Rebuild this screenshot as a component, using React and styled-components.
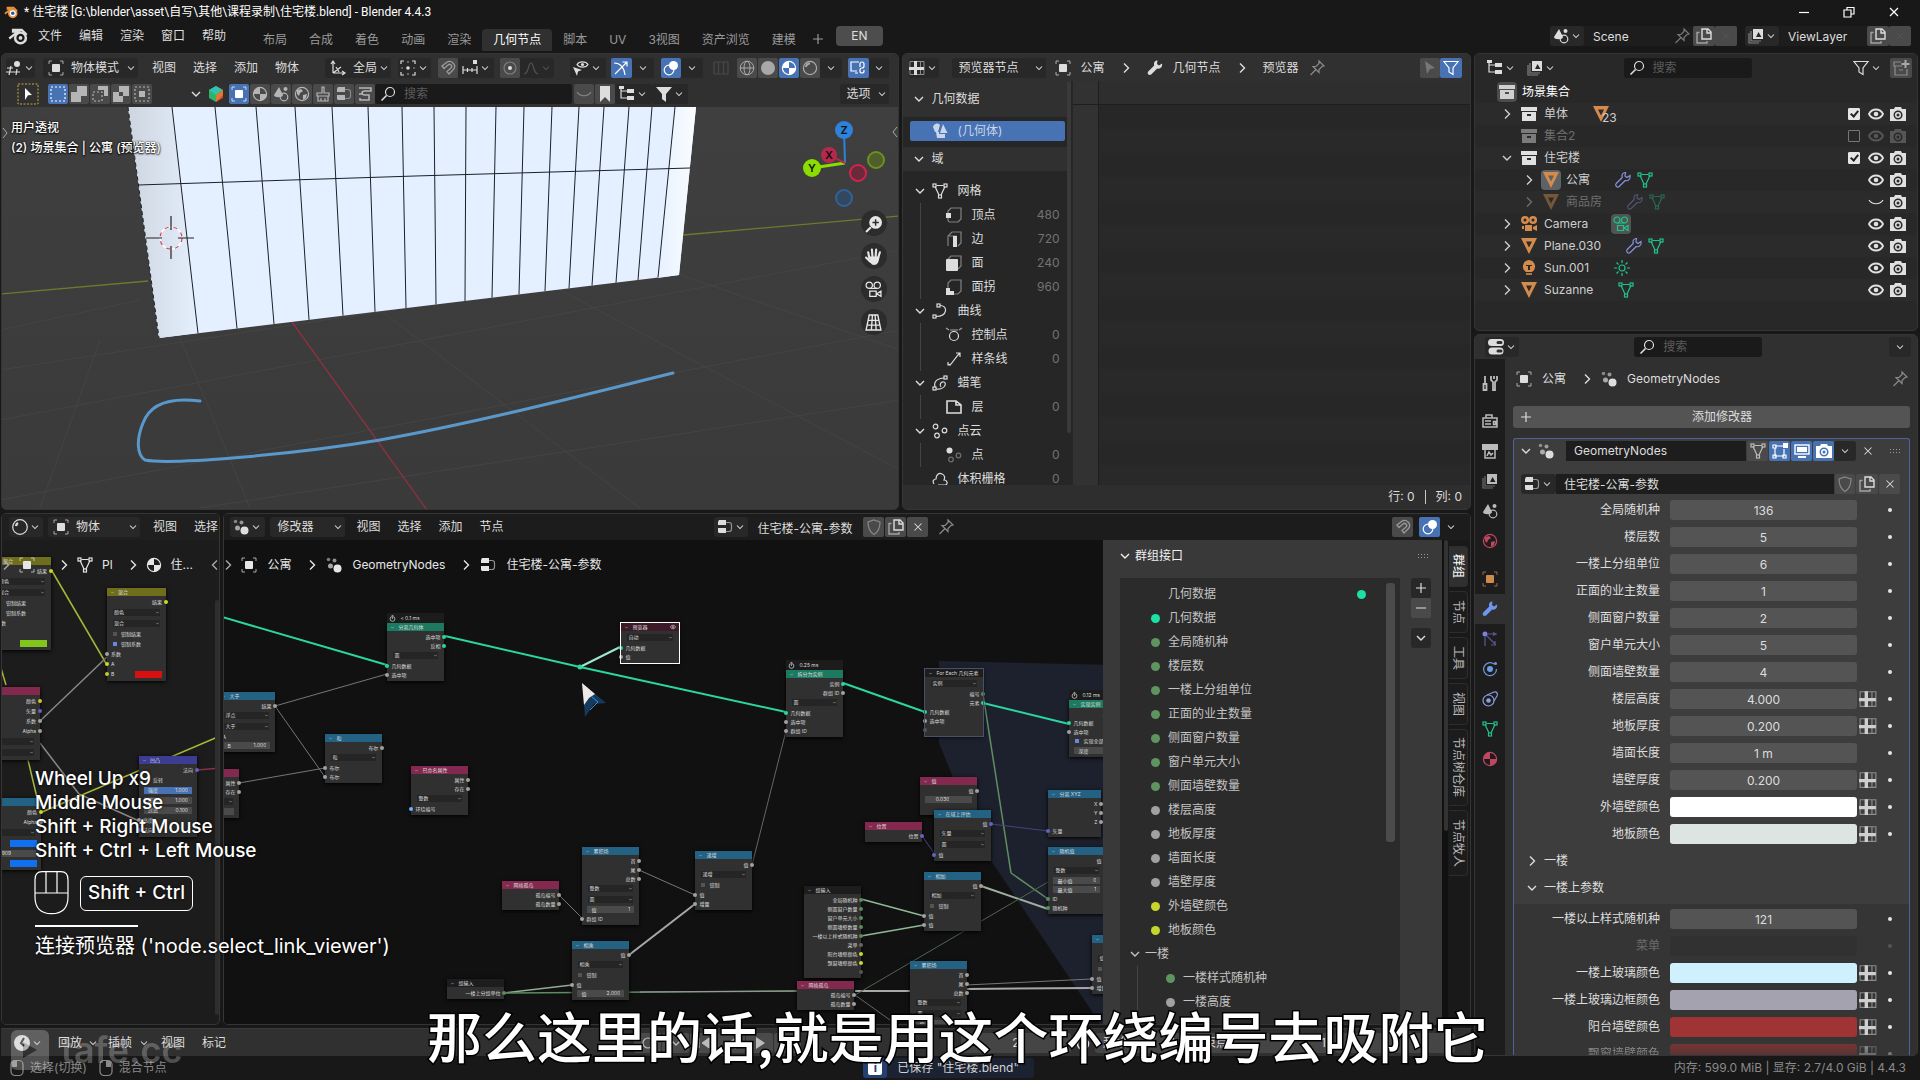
import React, { useId } from 'react';
import styled, { createGlobalStyle, css } from 'styled-components';

const Colors = {
  Window: '#181818',
  Header: '#303030',
  Area: '#282828',
  Dark: '#1d1d1d',
  Widget: '#545454',
  Drop: '#282828',
  Blue: '#4772b3',
  Text: '#dddddd',
  Geo: '#2bd6a0',
  Gray: '#a1a1a1',
  Int: '#598c5c',
  Color: '#c7c729',
};

const GlobalStyle = createGlobalStyle`
  * {
    box-sizing: border-box;
  }
  body {
    margin: 0;
    background: ${Colors.Window};
    overflow: hidden;
  }
  body, button, input, select {
    font-family: Inter, 'Noto Sans CJK SC', sans-serif;
    font-size: 12px;
    line-height: 16px;
    color: ${Colors.Text};
  }
  button, input, select {
    margin: 0;
    padding: 0;
    border: 0;
    background: none;
    outline: 0;
  }
  ul {
    margin: 0;
    padding: 0;
    list-style: none;
  }
`;

/* ---------- icons ---------- */

const line = { fill: 'none', stroke: 'currentColor', strokeWidth: 1.2 };
const solid = { fill: 'currentColor' };

const ICONS = {
  down: <path d="M4 6l4 4 4-4" {...line} strokeWidth={1.4} />,
  right: <path d="M6 3.5l4.5 4.5L6 12.500" {...line} strokeWidth={1.4} />,
  left: <path d="M10 3.500L5.500 8 10 12.500" {...line} strokeWidth={1.4} />,
  plus: <path d="M8 3v10M3 8h10" {...line} />,
  minus: <path d="M3 8h10" {...line} />,
  close: <path d="M4 4l8 8M12 4l-8 8" {...line} />,
  search: (
    <g {...line}>
      <circle cx="10" cy="6" r="4.500" />
      <path d="M6.500 9.500L1.500 14.500" strokeWidth="1.600" />
    </g>
  ),
  view3d: (
    <g>
      <circle cx="11" cy="4" r="3" {...solid} />
      <path d="M1 8h6M0 12h14M5 6l-2 9M11 9l-1 6" {...line} />
    </g>
  ),
  object: (
    <g>
      <rect x="4" y="4" width="8" height="8" rx="1" {...solid} />
      <path d="M1 4V1h3M12 1h3v3M15 12v3h-3M4 15H1v-3" {...line} strokeWidth={1} opacity=".7" />
    </g>
  ),
  orient: <path d="M3 13V2M1 4l2-3 2 3M3 13h11M12 11l3 2-3 2M3 13l8-6M6 7l3 5" {...line} />,
  pivot: (
    <g>
      <circle cx="8" cy="8" r="1.800" {...solid} />
      <path d="M1 4V1h3M12 1h3v3M15 12v3h-3M4 15H1v-3" {...line} />
      <path d="M8 1v2M8 13v2M1 8h2M13 8h2" {...line} opacity=".6" />
    </g>
  ),
  magnet: (
    <path d="M2 6l4.500-3.500a5 5 0 0 1 7 7L9 14l-2-2.500 4-3.500a2 2 0 0 0-3-3L4 8.500z" {...line} strokeWidth={1.300} />
  ),
  snap: (
    <g>
      <path d="M1 6v8M1 10h14M5.500 8v4M10 8v4M15 6v8" {...line} />
      <rect x="11" y="0" width="4" height="4" {...solid} />
    </g>
  ),
  prop: (
    <g>
      <circle cx="8" cy="8" r="2" {...solid} />
      <circle cx="8" cy="8" r="6" {...line} opacity=".35" />
    </g>
  ),
  falloff: <path d="M1 14c5 0 4-11 7-11s2 11 7 11" {...line} />,
  visible: (
    <g>
      <path d="M4 4.500C6 1 13 1 15 4.500 13 8 6 8 4 4.500z" {...line} />
      <circle cx="9.500" cy="4.500" r="1.600" {...solid} />
      <path d="M0 7l9 3-4 1.500L4 16z" {...solid} />
    </g>
  ),
  gizmo: (
    <g {...line}>
      <path d="M2 14L14 2M9.500 2H14v4.500" />
      <path d="M1 3c6 0 10 4 11 12" />
    </g>
  ),
  overlay: (
    <g>
      <circle cx="10.500" cy="5.500" r="4.500" {...solid} />
      <circle cx="6" cy="10" r="4.800" {...line} />
    </g>
  ),
  xray: <path d="M1 2h14v12H1zM5.500 2v12M10.500 2v12" {...line} />,
  wire: (
    <g {...line} strokeWidth={1}>
      <circle cx="8" cy="8" r="6.800" />
      <ellipse cx="8" cy="8" rx="3" ry="6.800" />
      <path d="M1 8h14" />
    </g>
  ),
  solid: <circle cx="8" cy="8" r="7" {...solid} />,
  material: (
    <g>
      <circle cx="8" cy="8" r="6.600" {...line} />
      <path d="M8 8V1.400A6.600 6.600 0 0 0 1.400 8zM8 8h6.600A6.600 6.600 0 0 1 8 14.600z" {...solid} />
    </g>
  ),
  rendered: (
    <g {...line}>
      <circle cx="8" cy="8" r="6.600" />
      <path d="M4 7a4 4 0 0 1 4-3.500" strokeWidth="2" />
    </g>
  ),
  screen: (
    <g {...line}>
      <path d="M9 2H1v9h6M5 13h3" />
      <path d="M10 7V4a2 2 0 0 1 4 0v2a2 2 0 0 1-2 2 2 2 0 0 0-2 2v1a2 2 0 0 0 4 0v-1" />
    </g>
  ),
  tool: (
    <g>
      <rect x="-2" y="-2" width="20" height="20" fill="none" stroke="#c8a53a" strokeDasharray="2 1.500" />
      <path d="M5 2l7 7-4 .300L5 14z" fill="#fff" />
    </g>
  ),
  marquee: <rect x="1" y="1" width="14" height="14" {...line} strokeDasharray="2 2" />,
  union: <path d="M6 0h10v10h-6v6H0V6h6z" {...solid} />,
  subtract: (
    <g>
      <path d="M6 0h10v10h-4V4H6z" {...solid} />
      <rect x="1" y="6" width="9" height="9" {...line} strokeDasharray="2 2" />
    </g>
  ),
  difference: <path d="M6 0h10v10h-6v6H0V6h6zM6 6v4h4V6z" fillRule="evenodd" {...solid} />,
  intersect: (
    <g>
      <rect x="5" y="5" width="6" height="6" {...solid} />
      <rect x="1" y="1" width="14" height="14" {...line} strokeDasharray="2 2" />
    </g>
  ),
  hex: (
    <g>
      <path d="M8 0l7 4v8l-7 4V8z" fill="#d2452f" />
      <path d="M8 0L1 4v8l7 4V8z" fill="#2fb36c" />
      <path d="M8 0l7 4-7 5-7-5z" fill="#2fc3b0" />
      <path d="M8 9l7-5v5l-7 7z" fill="#e2782f" />
    </g>
  ),
  scene: (
    <g>
      <path d="M6 1l4 8c0 3-9 3-9 0z" {...solid} />
      <circle cx="11" cy="11" r="3.800" {...line} />
      <circle cx="12.500" cy="3" r="2" {...solid} />
    </g>
  ),
  world: (
    <g>
      <circle cx="8" cy="8" r="6.600" {...line} />
      <path d="M3 4l4-1 2 2-3 2-1 3-2-2zM9 9l4-1-1 4-3 2z" {...solid} />
    </g>
  ),
  brush: <path d="M7 1h2v6h5v3H2V7h5zM3 10v5h10v-5M6 12v3M10 12v3" {...line} />,
  nodetree: (
    <g>
      <path d="M2 1h7v5H1V3zM1 9h8v5H2l-1-1z" {...solid} />
      <path d="M9 3.500h3a2.500 2.500 0 0 1 2.500 2.500v4a2.500 2.500 0 0 1-2.500 2.500H9" {...line} opacity=".6" />
    </g>
  ),
  stamp: <path d="M2 2h12v3H8c-4 0-4 4 0 4h4v5H3v-2M2 8h3" {...line} strokeWidth={1.600} />,
  closedEye: <path d="M1 6c3 5 11 5 14 0" {...line} />,
  bookmark: <path d="M3 0h10v16l-5-5-5 5z" {...solid} />,
  outliner: (
    <g>
      <path d="M2 1v11h6M2 5h6" {...line} />
      <path d="M0 0h5v3H0zM8 3h7v4H8zM8 10h7v4H8z" {...solid} />
    </g>
  ),
  filterOn: <path d="M0 1h16l-6 7v8l-4-3V8z" {...solid} />,
  filter: <path d="M1 1.500h14L10 8v6.500L6 12V8z" {...line} />,
  sheet: (
    <g>
      <path d="M1 1.500h14v13H1zM11.500 2v12" {...line} strokeWidth={1} opacity=".55" />
      <path d="M5 1h3v14H5zM0 7h15v3H0z" {...solid} />
    </g>
  ),
  wrench: (
    <path
      d="M15 3.500l-3 2-2-1.500.500-3.500C7.500.500 6.500 3 7.200 5.500L1.200 11.500c-1.600 2 .800 4.500 3 3l6-6C13 9.500 15.800 7 15 3.500z"
      {...solid}
    />
  ),
  wrenchLine: (
    <path
      d="M15 3.500l-3 2-2-1.500.500-3.500C7.500.500 6.500 3 7.200 5.500L1.200 11.500c-1.600 2 .800 4.500 3 3l6-6C13 9.500 15.800 7 15 3.500z"
      {...line}
    />
  ),
  pin: <path d="M10 1l5 5-2 .500-3 3 0 3-6-6h3l3-3zM7 9.500L1.500 15" {...line} />,
  arrow: <path d="M3 1l10 7-5 1-3 5z" {...solid} />,
  geometry: (
    <g {...solid}>
      <path d="M1 4a4 4 0 0 1 7-2L6 9H3z" />
      <path d="M11 1l4.500 9H8z" />
      <path d="M4 9h3v2h6v4H5z" />
    </g>
  ),
  mesh: (
    <g {...line}>
      <path d="M3 3.500l4 8.500M13 3.500L9 12M4.500 2.500h7" />
      <rect x="1" y="1" width="3" height="3" />
      <rect x="12" y="1" width="3" height="3" />
      <rect x="6.500" y="12" width="3" height="3" />
    </g>
  ),
  vertex: (
    <g>
      <path d="M2 6V4l3-3h10v11l-3 3H4c-1 0-2-1-2-2v-2" {...line} opacity=".5" />
      <rect x="0" y="6" width="5" height="5" {...solid} />
    </g>
  ),
  edge: (
    <g>
      <path d="M2 15V5l4-4h9v11l-3 3M11 5H3" {...line} opacity=".5" />
      <rect x="7" y="5" width="4" height="11" {...solid} />
    </g>
  ),
  face: (
    <g>
      <path d="M2 4l3-3h10v10l-3 3" {...line} opacity=".5" />
      <rect x="0" y="4" width="12" height="12" rx="1" {...solid} />
    </g>
  ),
  corner: (
    <g>
      <path d="M2 9V4l3-3h10v11l-3 3H8" {...line} opacity=".5" />
      <path d="M0 9h4v3h4v4H0z" {...solid} />
    </g>
  ),
  curve: (
    <g {...line}>
      <path d="M8 2.500c8 0 8 10.500-4 11" />
      <rect x="5" y="1" width="3" height="3" />
      <rect x="1" y="12" width="3" height="3" />
    </g>
  ),
  control: (
    <g {...line}>
      <circle cx="8" cy="9" r="4.500" />
      <path d="M4 3h8M0 1l3 2M16 1l-3 2" opacity=".7" />
    </g>
  ),
  spline: <path d="M2 14l3-1 7-9 2-2M10 2h4v4M2 11v3h3" {...line} />,
  gpencil: (
    <g {...line}>
      <path d="M3 12C1 5 8 3 12 3M4 14c9 1 11-6 8-7s-5 3-3 5" />
      <rect x="12" y="1" width="3" height="3" />
      <rect x="1" y="12" width="3" height="3" />
    </g>
  ),
  layer: <path d="M1 2h9l5 4v8H1zM10 2v4h5" {...line} strokeWidth={1.600} />,
  points: (
    <g {...line}>
      <circle cx="3.500" cy="3.500" r="2.300" />
      <circle cx="12.500" cy="7.500" r="2.300" />
      <circle cx="5" cy="12.500" r="2.300" />
    </g>
  ),
  point: (
    <g>
      <circle cx="3.500" cy="3.500" r="3" {...solid} />
      <circle cx="12.500" cy="8.500" r="2.300" {...line} opacity=".4" />
      <circle cx="5" cy="12.500" r="2.300" {...line} opacity=".4" />
    </g>
  ),
  volume: <path d="M2 13c-2-3 0-5 2-5 0-4 3-7 6-5 3 1 3 4 2 6 3 0 4 3 2 5H6" {...line} />,
  copy: (
    <g {...line} strokeWidth={1.400}>
      <path d="M6 1h6l3 3v7H6zM11 1v4h4" />
      <path d="M3.500 4.500H1V15h10v-2" opacity=".6" />
    </g>
  ),
  layers: (
    <g>
      <path d="M5 1h10v10H5zM8 9l2.500-5 3 5z" fillRule="evenodd" {...solid} />
      <path d="M3 3v10h10M1 5v10h10" {...line} opacity=".5" />
    </g>
  ),
  collection: (
    <path d="M0 1h16v4H0zM1 6h14v9H1zM6 8v2h4V8z" fillRule="evenodd" {...solid} />
  ),
  meshObject: <path d="M0 0h16L8 16zM5 3.500l3 6 3-6z" fillRule="evenodd" {...solid} />,
  camera: (
    <g {...solid}>
      <path d="M4 0a4 4 0 1 0 .1 8A4 4 0 0 0 4 0zm0 2.500a1.500 1.500 0 1 1 0 3 1.500 1.500 0 0 1 0-3zM12 0a4 4 0 1 0 .1 8A4 4 0 0 0 12 0zm0 2.500a1.500 1.500 0 1 1 0 3 1.500 1.500 0 0 1 0-3z" fillRule="evenodd" />
      <path d="M4 9h7v6H4zM12 11l4-2v6l-4-2zM1 10h2v3H1z" />
    </g>
  ),
  cameraLine: (
    <g {...line}>
      <circle cx="4" cy="4" r="3" />
      <circle cx="11.500" cy="4" r="3" />
      <path d="M4 7h7.500M4.500 9.500h6v5h-6zM11 12l4-2.500v5z" />
    </g>
  ),
  bulb: (
    <g>
      <path d="M8 0a6.500 6.500 0 0 0-3 12h6A6.500 6.500 0 0 0 8 0zM5 5h6v1H9v4H7V6H5z" fillRule="evenodd" {...solid} />
      <path d="M5 14h6" {...line} strokeWidth={1.600} />
    </g>
  ),
  sun: (
    <g {...line}>
      <circle cx="8" cy="8" r="3" />
      <path d="M8 0v3M8 13v3M0 8h3M13 8h3M2.500 2.500l2 2M11.500 11.500l2 2M13.500 2.500l-2 2M4.500 11.500l-2 2" />
    </g>
  ),
  eye: (
    <g>
      <path d="M1 8c3-6 11-6 14 0-3 6-11 6-14 0z" {...line} strokeWidth={1.800} />
      <circle cx="8" cy="8" r="2.300" {...solid} />
    </g>
  ),
  photo: (
    <path
      d="M0 3h4l1-2h6l1 2h4v12H0zM8 4.500a4.500 4.500 0 1 0 .1 9 4.500 4.500 0 0 0-.1-9zM8 6a3 3 0 1 1 0 6 3 3 0 0 1 0-6z M8 7.500a1.500 1.500 0 1 0 0 3 1.500 1.500 0 0 0 0-3z"
      fillRule="evenodd"
      {...solid}
    />
  ),
  newCollection: (
    <g>
      <path d="M8 2H1v4h8M2 6v9h12V9M6 10h4" {...line} opacity=".7" />
      <path d="M12.500 0v8M8.500 4h8" {...line} strokeWidth={2} />
    </g>
  ),
  properties: (
    <g>
      <rect x="0" y="0" width="16" height="7" rx="3.500" {...solid} />
      <rect x="0.500" y="8.500" width="15" height="7" rx="3.500" {...solid} />
      <path d="M10 3.500h3M10 12h3" stroke="#303030" strokeWidth="3" strokeLinecap="round" />
    </g>
  ),
  tools: <path d="M3 1v7M1.500 9h3v6h-3zM9 1v4l2 2v8h2V7l2-2V1M12 1v3" {...line} strokeWidth={1.800} />,
  renderTab: <path d="M1 5h14v9H1zM4 5V2h6v3M3 8h6M3 11h6M11.500 8.500h2v3h-2z" {...line} strokeWidth={1.500} />,
  outputTab: (
    <g>
      <path d="M0 1h16v6H0z" {...solid} />
      <path d="M3 7v8h10V7M5 13l2-4 2 3 2-2" {...line} strokeWidth={1.500} />
    </g>
  ),
  particles: (
    <g>
      <circle cx="3" cy="3" r="2.500" {...solid} />
      <path d="M6 3h9M3 6v9M5 5l9 9M11 1.500l3 1.500-3 1.500M13 10v4H9" {...line} opacity=".6" />
    </g>
  ),
  physics: (
    <g>
      <circle cx="8" cy="8" r="3" {...solid} />
      <path d="M12 3A6.500 6.500 0 1 0 14.500 8" {...line} />
      <circle cx="13.500" cy="2.500" r="1.500" {...solid} />
    </g>
  ),
  constraint: (
    <g>
      <circle cx="6.500" cy="9.500" r="5.500" {...line} />
      <circle cx="6.500" cy="9.500" r="2.300" {...solid} />
      <path d="M5 4l7-3c3-1 4 2 3 4l-3 5" {...line} />
    </g>
  ),
  nodes: (
    <g {...solid}>
      <circle cx="11.500" cy="11.500" r="4" />
      <circle cx="4.500" cy="9" r="2.500" opacity=".7" />
      <circle cx="2.500" cy="2.500" r="1.800" opacity=".5" />
      <circle cx="8.500" cy="3.500" r="2" opacity=".6" />
    </g>
  ),
  editMode: (
    <g>
      <path d="M3 3h8M3 5v8h9v-7" {...line} />
      <rect x="11" y="0" width="5" height="5" {...solid} />
      <path d="M1 2h3v3H1zM1 12h3v3H1zM11 12h3v3h-3z" {...line} />
    </g>
  ),
  monitor: (
    <g>
      <rect x="1" y="2" width="14" height="9" {...line} strokeWidth={1.400} />
      <path d="M3 4h10v5H3zM4 13h8v2H4z" {...solid} />
    </g>
  ),
  shield: <path d="M8 1l6 2c0 6-2 10-6 12.500C4 13 2 9 2 3z" {...line} />,
  clock: (
    <g>
      <circle cx="8" cy="8" r="8" {...solid} />
      <path d="M10 3L7 8l3 3" fill="none" stroke="#222" strokeWidth="2" />
    </g>
  ),
  timer: (
    <g {...line} strokeWidth={1.600}>
      <circle cx="8" cy="9" r="5.500" />
      <path d="M8 9V5M6 1h4" />
    </g>
  ),
  shader: (
    <g {...line}>
      <circle cx="8" cy="8" r="7.300" />
      <path d="M4 7a4 4 0 0 1 2-3" strokeWidth="2.500" />
    </g>
  ),
  grip: (
    <g fill="currentColor">
      {[0, 3, 6, 9].map((x) => (
        <path key={x} d={`M${x + 3} 6h1v1h-1zM${x + 3} 9h1v1h-1z`} />
      ))}
    </g>
  ),
  blender: (
    <g>
      <path d="M1 10l7-5.500H4V3h7l4 4" {...line} strokeWidth={1.800} />
      <circle cx="10" cy="9.500" r="4.300" fill="none" stroke="currentColor" strokeWidth="2" />
      <circle cx="10" cy="9.500" r="1.500" {...solid} />
    </g>
  ),
  blenderColor: (
    <g>
      <path d="M1 10l7-5.500H4V3h7l4 4" fill="none" stroke="#e8913c" strokeWidth="2" />
      <circle cx="10" cy="9.500" r="4.500" fill="#fff" stroke="#e8913c" strokeWidth="2" />
      <circle cx="10" cy="9.500" r="2" fill="#235a9c" />
    </g>
  ),
  mouseLeft: (
    <g>
      <rect x="2" y="0.500" width="12" height="15" rx="4" {...line} />
      <path d="M3 1h5v6H3z" {...solid} />
    </g>
  ),
  mouseRight: (
    <g>
      <rect x="2" y="0.500" width="12" height="15" rx="4" {...line} />
      <path d="M8 1h5v6H8z" {...solid} />
    </g>
  ),
  minWin: <path d="M3 8.500h10" {...line} />,
  maxWin: <path d="M3 6h7v7H3zM6 6V3.500h7V10h-3" {...line} />,
  first: <path d="M3 3v10M13 3L6 8l7 5z" {...solid} stroke="currentColor" />,
  playBack: <path d="M12 2v12L4 8z" {...solid} />,
  play: <path d="M4 2v12l9-6z" {...solid} />,
  last: <path d="M13 3v10M3 3l7 5-7 5z" {...solid} stroke="currentColor" />,
  record: <circle cx="8" cy="8" r="5" {...line} />,
};

const Svg = styled.svg`
  display: block;
  flex: none;
  width: ${(p) => p.$size || 16}px;
  height: ${(p) => p.$size || 16}px;
  color: ${(p) => p.$color || 'inherit'};
  opacity: ${(p) => p.$fade || 1};
  overflow: visible;
`;

function Icon({ name, size, color, fade }) {
  return (
    <Svg viewBox="0 0 16 16" $size={size} $color={color} $fade={fade} aria-hidden="true">
      {ICONS[name]}
    </Svg>
  );
}

/* ---------- shared widgets ---------- */

const Screen = styled.div`
  display: flex;
  flex-direction: column;
  height: 100vh;
  position: relative;
  overflow: hidden;
`;

const Row = styled.div`
  display: flex;
  align-items: center;
  gap: ${(p) => p.$gap || 0}px;
  margin-left: ${(p) => p.$ml || 0}px;
`;

const Spacer = styled.div`
  flex: ${(p) => p.$grow || 1} 1 0;
`;

const Bar = styled.div`
  display: flex;
  align-items: center;
  flex: none;
  height: ${(p) => p.$h || 27}px;
  padding: 0 ${(p) => p.$right || 9}px 0 ${(p) => p.$left || 4}px;
  background: ${(p) => p.$bg || Colors.Header};
  white-space: nowrap;
  overflow: hidden;
`;

const Tool = styled.button`
  display: flex;
  align-items: center;
  justify-content: center;
  flex: none;
  width: ${(p) => p.$w || 20}px;
  height: 20px;
  margin-left: ${(p) => p.$ml || 0}px;
  border-radius: 2px;
  background: ${(p) => (p.$on ? Colors.Blue : p.$flat ? 'none' : '#4a4a4a')};
  color: ${(p) => (p.$on ? '#fff' : p.$dim ? '#666' : Colors.Text)};
`;

const MenuButton = styled.button`
  flex: none;
  height: 20px;
  padding: 0 8px;
  margin-right: 1px;
  white-space: nowrap;
`;

const DropFrame = styled.label`
  display: flex;
  align-items: center;
  flex: none;
  width: ${(p) => p.$w}px;
  height: 20px;
  margin-left: ${(p) => p.$ml || 0}px;
  padding: 0 1px 0 5px;
  border-radius: 3px;
  background: ${(p) => p.$bg || Colors.Drop};
`;

const Select = styled.select`
  appearance: none;
  flex: 1;
  min-width: 0;
  height: 20px;
  margin-left: ${(p) => (p.$icon ? 7 : 2)}px;
`;

const IconDrop = styled.button`
  display: flex;
  align-items: center;
  justify-content: center;
  gap: 1px;
  flex: none;
  width: ${(p) => p.$w}px;
  height: 20px;
  margin-left: ${(p) => p.$ml || 0}px;
  border-radius: 3px;
  background: ${(p) => p.$bg || Colors.Drop};
  color: ${(p) => (p.$dim ? '#555' : Colors.Text)};
`;

function Dropdown({ icon, value, w, ml, bg, label }) {
  return (
    <DropFrame $w={w} $ml={ml} $bg={bg}>
      {icon && <Icon name={icon} />}
      <Select $icon={icon} defaultValue={value} aria-label={label || value}>
        <option>{value}</option>
      </Select>
      <Icon name="down" size={12} />
    </DropFrame>
  );
}

function IconMenu({ icon, w, ml, bg, dim, label }) {
  return (
    <IconDrop $w={w} $ml={ml} $bg={bg} $dim={dim} aria-label={label || icon}>
      {icon && <Icon name={icon} />}
      <Icon name="down" size={12} />
    </IconDrop>
  );
}

const SearchFrame = styled.label`
  display: flex;
  align-items: center;
  flex: none;
  gap: 8px;
  width: ${(p) => p.$w}px;
  height: 20px;
  padding-left: 5px;
  border-radius: 3px;
  background: #1a1a1a;

  input {
    flex: 1;
    min-width: 0;
  }
  input::placeholder {
    color: #5c5c5c;
    opacity: 1;
  }
`;

function Search({ w }) {
  return (
    <SearchFrame $w={w}>
      <Icon name="search" />
      <input placeholder="搜索" aria-label="搜索" />
    </SearchFrame>
  );
}

const Area = styled.section`
  display: flex;
  flex-direction: column;
  flex: ${(p) => p.$grow} 1 0;
  min-width: 0;
  min-height: 0;
  position: relative;
  overflow: hidden;
  border: 1px solid #353535;
  border-radius: 5px;
  background: ${(p) => p.$bg || Colors.Area};
`;

const Crumbs = styled.nav`
  display: flex;
  align-items: center;
  gap: ${(p) => p.$gap || 10}px;
  white-space: nowrap;
`;

const Sep = styled.span`
  display: flex;
  margin: 0 ${(p) => (p.$tight ? -4 : 3)}px 0 3px;
`;

/* ---------- top bar ---------- */

const TitleBar = styled.header`
  display: flex;
  align-items: center;
  flex: none;
  height: 24px;
  padding: 0 18px 0 4px;
  gap: 6px;
  color: #fff;
  font-family: Roboto, 'Noto Sans CJK SC', sans-serif;
`;

const WindowButtons = styled.div`
  display: flex;
  gap: 29px;
  margin-left: auto;

  button {
    display: flex;
    color: #fff;
  }
`;

const MenuBar = styled.div`
  display: flex;
  align-items: flex-start;
  flex: none;
  height: 29px;
  padding: 2px 9px 0 8px;
`;

const Workspaces = styled.div`
  display: flex;
  align-self: flex-end;
  margin: 0 0 2px 17px;
`;

const WorkTab = styled.button`
  height: 22px;
  padding: 0 11px;
  border-radius: 4px 4px 0 0;
  background: ${(p) => (p.$on ? '#303030' : 'none')};
  color: ${(p) => (p.$on ? '#fff' : '#9a9a9a')};
`;

const LangButton = styled.button`
  width: 47px;
  height: 20px;
  margin-left: 7px;
  border-radius: 4px;
  background: #4d4d4d;
`;

const DataBlock = styled.div`
  display: flex;
  align-items: center;
  height: 20px;
  margin-left: ${(p) => p.$ml || 0}px;
  border-radius: 3px;
  background: ${Colors.Dark};
`;

const NameInput = styled.input`
  width: ${(p) => p.$w}px;
  height: 20px;
  padding: 0 9px;
  background: ${Colors.Dark};
`;

const TABS = ['布局', '合成', '着色', '动画', '渲染', '几何节点', '脚本', 'UV', '3视图', '资产浏览', '建模'];

function TopBar() {
  return (
    <>
      <TitleBar>
        <Icon name="blenderColor" size={14} />
        <span>* 住宅楼 [G:\blender\asset\自写\其他\课程录制\住宅楼.blend] - Blender 4.4.3</span>
        <WindowButtons>
          <button aria-label="最小化"><Icon name="minWin" /></button>
          <button aria-label="还原"><Icon name="maxWin" /></button>
          <button aria-label="关闭"><Icon name="close" /></button>
        </WindowButtons>
      </TitleBar>
      <MenuBar>
        <Row>
          <Icon name="blender" size={20} />
          <Row $ml={2}>
            {['文件', '编辑', '渲染', '窗口', '帮助'].map((m) => (
              <MenuButton key={m}>{m}</MenuButton>
            ))}
          </Row>
        </Row>
        <Workspaces>
          {TABS.map((t, i) => (
            <WorkTab key={i} $on={t === '几何节点'}>{t}</WorkTab>
          ))}
          <Tool $flat $dim $w={22} aria-label="添加工作区"><Icon name="plus" color="#9a9a9a" /></Tool>
        </Workspaces>
        <LangButton>EN</LangButton>
        <Spacer />
        <DataBlock>
          <IconMenu icon="scene" w={34} label="场景" />
          <NameInput $w={88} defaultValue="Scene" aria-label="场景名称" />
          <Tool $flat aria-label="固定"><Icon name="pin" color="#777" /></Tool>
          <Tool $w={22} $ml={1} aria-label="新建场景"><Icon name="copy" /></Tool>
          <Tool $w={22} $dim aria-label="删除场景"><Icon name="close" color="#555" size={12} /></Tool>
        </DataBlock>
        <DataBlock $ml={8}>
          <IconMenu icon="layers" w={34} label="视图层" />
          <NameInput $w={88} defaultValue="ViewLayer" aria-label="视图层名称" />
          <Tool $w={22} aria-label="新建视图层"><Icon name="copy" /></Tool>
          <Tool $w={22} $dim aria-label="删除视图层"><Icon name="close" color="#555" size={12} /></Tool>
        </DataBlock>
      </MenuBar>
    </>
  );
}

/* ---------- 3D viewport ---------- */

const ViewportBody = styled.div`
  flex: 1;
  min-height: 0;
  position: relative;
  overflow: hidden;
  background: linear-gradient(#3f3f3f, #3a3a3a);
`;

const ViewportSvg = styled.svg`
  position: absolute;
  left: 0;
  top: 0;
  width: 100%;
  height: 100%;
`;

const ViewportInfo = styled.div`
  position: absolute;
  left: 9px;
  top: 11px;
  line-height: 20px;
  font-weight: 500;
  color: #fff;
  text-shadow: 0 0 2px #000, 0 1px 2px #000;
`;

const NavGizmos = styled.div`
  position: absolute;
  right: 11px;
  top: 103px;
  display: flex;
  flex-direction: column;
  gap: 7px;

  button {
    display: flex;
    align-items: center;
    justify-content: center;
    width: 26px;
    height: 26px;
    border-radius: 13px;
    background: #2c2c2c;
    color: #e6e6e6;
  }
`;

const NAV = {
  zoom: (
    <g>
      <circle cx="10" cy="7" r="6" fill="currentColor" />
      <path d="M5.500 11.500L1 16" stroke="currentColor" strokeWidth="2" />
      <path d="M10 4v6M7 7h6" stroke="#2c2c2c" strokeWidth="1.400" />
    </g>
  ),
  hand: (
    <path
      d="M4 9L3 4M7 8L6.500 1.500M10 8l.500-6.500M12.500 9L14 4M1 9l4 4"
      stroke="currentColor"
      strokeWidth="2"
      strokeLinecap="round"
      fill="none"
    />
  ),
  palm: <path d="M3.500 8h10c0 5-2 8-5 8S4.500 13 3.500 8z" fill="currentColor" />,
  grid: <path d="M4 1h8l3 14H1zM3 6h10M2 10.500h12M7 1l-1 14M9.500 1l1 14" fill="none" stroke="currentColor" strokeWidth="1.300" />,
};

const FACADE_TOP = [172, 215, 256, 295, 332, 368, 402, 434, 466, 496, 524, 552, 579, 604, 629, 652, 675];
const FACADE_BOTTOM = [198, 237, 274, 309, 343, 375, 406, 436, 465, 492, 519, 545, 569, 592, 616, 638, 658];
const baseY = (x) => 338 - (x - 159) * 0.1212;

function Scene3D() {
  return (
    <ViewportSvg aria-hidden="true">
      <defs>
        <linearGradient id="leftFace">
          <stop offset="0" stopColor="#cdd5df" />
          <stop offset="1" stopColor="#e4effd" />
        </linearGradient>
        <linearGradient id="rightFace">
          <stop offset="0" stopColor="#e6f1ff" />
          <stop offset="1" stopColor="#fafdff" />
        </linearGradient>
      </defs>
      <g transform="translate(-2 -107)">
        <g stroke="#4a4a4a" strokeWidth="1" opacity=".6">
          <path d="M0 420L900 250M0 370L520 290M0 500L900 330M200 508L900 400M100 340L40 508M180 338L250 508M380 310L640 508M560 290L900 470M680 275L900 350M0 330L140 300" />
        </g>
        <path d="M0 294L148 281M683 235L900 216" stroke="#6c7a2c" strokeWidth="1.300" />
        <path d="M292 322L427 510" stroke="#8e3040" strokeWidth="1.300" />
        <path d="M128 107L159 338L679 275L696 107z" fill="#e4f0ff" />
        <path d="M128 107L159 338L198 333L172 107z" fill="url(#leftFace)" />
        <path d="M675 107L658 278L679 275L696 107z" fill="url(#rightFace)" />
        <g stroke="#1b2027" strokeWidth="1">
          {FACADE_TOP.map((x, i) => (
            <line key={x} x1={x} y1="107" x2={FACADE_BOTTOM[i]} y2={baseY(FACADE_BOTTOM[i])} />
          ))}
          <path d="M138 185L415 176L690 168" fill="none" />
          <path d="M128 107L159 338" strokeDasharray="4 3" />
        </g>
        <g fill="none">
          <circle cx="171" cy="238" r="11" stroke="#fff" strokeWidth="1.200" />
          <circle cx="171" cy="238" r="11" stroke="#d0405c" strokeWidth="1.200" strokeDasharray="4 5" />
          <path d="M171 216v14M171 246v13M146 238h16M178 238h16" stroke="#222" strokeWidth="1.200" />
        </g>
        <path
          d="M200 401C170 397 150 404 143 423C136 440 137 455 145 460C170 465 290 455 380 440C480 422 580 396 673 373"
          fill="none"
          stroke="#5a98cc"
          strokeWidth="3"
          strokeLinecap="round"
        />
        <g strokeWidth="2">
          <path d="M845 163L844 130" stroke="#2d83dc" />
          <path d="M845 163L812 168" stroke="#8bdc00" strokeWidth="3" />
          <path d="M845 163L829 155" stroke="#b5294c" />
          <circle cx="829" cy="155" r="8" fill="#b5294c" />
          <circle cx="812" cy="168" r="9" fill="#8bdc00" />
          <circle cx="844" cy="130" r="9" fill="#2d83dc" />
          <circle cx="858" cy="173" r="8" fill="#6a2a3b" stroke="#d6234c" />
          <circle cx="876" cy="160" r="8" fill="#4f5e2c" stroke="#6b9416" />
          <circle cx="844" cy="198" r="8" fill="#33475f" stroke="#2f629a" />
        </g>
        <g fontFamily="Inter, sans-serif" fontSize="11" fontWeight="600" textAnchor="middle" fill="#111">
          <text x="844" y="134">Z</text>
          <text x="812" y="172">Y</text>
          <text x="829" y="159">X</text>
        </g>
        <path d="M3 128l4 5-4 5M897 127l-4 5 4 5" stroke="#aaa" fill="none" />
      </g>
    </ViewportSvg>
  );
}

function Viewport() {
  return (
    <Area $grow={898}>
      <Bar>
        <IconMenu icon="view3d" w={29} label="编辑器类型" />
        <Dropdown icon="object" value="物体模式" w={95} ml={8} />
        <Row $ml={6}>
          {['视图', '选择', '添加', '物体'].map((m) => (
            <MenuButton key={m}>{m}</MenuButton>
          ))}
        </Row>
        <Dropdown icon="orient" value="全局" w={66} ml={17} label="坐标系" />
        <IconMenu icon="pivot" w={33} ml={7} label="轴心点" />
        <Tool $ml={7} aria-label="吸附"><Icon name="magnet" color="#9a9a9a" /></Tool>
        <IconMenu icon="snap" w={36} label="吸附至" />
        <Tool $ml={6} aria-label="比例编辑"><Icon name="prop" /></Tool>
        <IconMenu icon="falloff" w={34} dim label="衰减" />
        <Spacer />
        <IconMenu icon="visible" w={36} label="可见性" />
        <Tool $on $ml={5} $w={21} aria-label="控件"><Icon name="gizmo" /></Tool>
        <IconMenu w={22} label="控件选项" />
        <Tool $on $ml={7} aria-label="叠加层"><Icon name="overlay" /></Tool>
        <IconMenu w={22} label="叠加层选项" />
        <Tool $dim $flat $ml={8} aria-label="透视"><Icon name="xray" color="#484848" /></Tool>
        <Row $gap={1} $ml={6}>
          <Tool aria-label="线框"><Icon name="wire" color="#aaa" /></Tool>
          <Tool aria-label="实体"><Icon name="solid" color="#a8a8a8" /></Tool>
          <Tool $on aria-label="材质预览"><Icon name="material" /></Tool>
          <Tool aria-label="渲染"><Icon name="rendered" color="#aaa" /></Tool>
        </Row>
        <IconMenu w={22} label="着色选项" />
        <Tool $on $ml={6} $w={21} aria-label="屏幕"><Icon name="screen" /></Tool>
        <IconMenu w={20} label="屏幕选项" />
      </Bar>
      <Bar $left={15} $h={26}>
        <Tool $flat $w={22} aria-label="框选工具"><Icon name="tool" /></Tool>
        <Row $gap={1} $ml={9}>
          <Tool $on aria-label="新选区"><Icon name="marquee" /></Tool>
          {['union', 'subtract', 'difference', 'intersect'].map((n) => (
            <Tool key={n} aria-label={n}><Icon name={n} color="#b5b5b5" /></Tool>
          ))}
        </Row>
        <Tool $flat $ml={34} aria-label="展开"><Icon name="down" /></Tool>
        <Tool $flat aria-label="插件"><Icon name="hex" /></Tool>
        <Row $gap={1} $ml={3}>
          <Tool $on aria-label="object"><Icon name="object" /></Tool>
          {['material', 'scene', 'world', 'brush', 'nodetree', 'stamp'].map((n) => (
            <Tool key={n} aria-label={n}><Icon name={n} color="#b5b5b5" /></Tool>
          ))}
        </Row>
        <Search w={197} />
        <Row $ml={2} $gap={1}>
          <Tool aria-label="隐藏"><Icon name="closedEye" color="#888" /></Tool>
          <Tool aria-label="书签"><Icon name="bookmark" /></Tool>
        </Row>
        <IconMenu icon="outliner" w={37} label="层级" />
        <IconMenu icon="filterOn" w={36} label="过滤" />
        <Spacer />
        <Dropdown value="选项" w={49} />
      </Bar>
      <ViewportBody>
        <Scene3D />
        <ViewportInfo>
          用户透视
          <br />
          (2) 场景集合 | 公寓 (预览器)
        </ViewportInfo>
        <NavGizmos>
          <button aria-label="缩放"><Svg viewBox="0 0 16 16" $size={17}>{NAV.zoom}</Svg></button>
          <button aria-label="平移"><Svg viewBox="0 0 16 16" $size={17}>{NAV.hand}{NAV.palm}</Svg></button>
          <button aria-label="摄像机"><Icon name="cameraLine" size={17} /></button>
          <button aria-label="正交"><Svg viewBox="0 0 16 16" $size={17}>{NAV.grid}</Svg></button>
        </NavGizmos>
      </ViewportBody>
    </Area>
  );
}

/* ---------- spreadsheet ---------- */

const SheetMain = styled.div`
  display: flex;
  flex: 1;
  min-height: 0;
`;

const SheetSide = styled.aside`
  width: 164px;
  flex: none;
  overflow: hidden;
  background: #262626;

  ul {
    padding-top: 8px;
  }
`;

const SideHeader = styled.div`
  display: flex;
  align-items: center;
  gap: 5px;
  height: ${(p) => p.$h}px;
  padding-left: 8px;
  background: ${Colors.Header};
`;

const GeometryItem = styled.button`
  display: flex;
  align-items: center;
  gap: 10px;
  width: 155px;
  height: 20px;
  margin: 4px 0 6px 7px;
  padding-left: 22px;
  border-radius: 2px;
  background: ${Colors.Blue};
  color: #c9d5e8;
`;

const TreeRow = styled.li`
  display: flex;
  align-items: center;
  gap: 10px;
  height: 24px;
  margin-left: ${(p) => (p.$child ? 17 : 9)}px;
  padding-left: ${(p) => (p.$child ? 25 : p.$leaf ? 20 : 0)}px;
  padding-right: 7px;
  border-left: ${(p) => (p.$child ? '1px solid #444' : 'none')};

  > svg:first-child {
    margin-right: ${(p) => (p.$child || p.$leaf ? 0 : -6)}px;
  }
  output {
    margin-left: auto;
    color: #737373;
  }
`;

const VScroll = styled.div`
  flex: none;
  width: ${(p) => p.$w || 4}px;
  height: ${(p) => p.$h}px;
  margin: ${(p) => p.$mt || 0}px ${(p) => p.$mr || 0}px 0 ${(p) => p.$ml || 0}px;
  border-radius: 3px;
  background: ${(p) => p.$bg || '#3a3a3a'};
`;

const Sheet = styled.table`
  flex: 1;
  height: 100%;
  border-collapse: collapse;
  background: repeating-linear-gradient(#292929 0 24px, #272727 24px 48px);

  th {
    height: 23px;
    padding: 0;
    background: #2e2e2e;
    border-bottom: 1px solid #1e1e1e;
  }
  th:first-child,
  td:first-child {
    width: 26px;
    background: #323232;
    border-right: 1px solid #1e1e1e;
  }
`;

const SheetFooter = styled.footer`
  display: flex;
  align-items: center;
  justify-content: flex-end;
  flex: none;
  gap: 10px;
  height: 24px;
  padding-right: 8px;
  background: #2e2e2e;
`;

const FooterRule = styled.i`
  width: 1px;
  height: 14px;
  background: #c8c8c8;
`;

const TREE = [
  ['mesh', '网格'],
  ['vertex', '顶点', 480],
  ['edge', '边', 720],
  ['face', '面', 240],
  ['corner', '面拐', 960],
  ['curve', '曲线'],
  ['control', '控制点', 0],
  ['spline', '样条线', 0],
  ['gpencil', '蜡笔'],
  ['layer', '层', 0],
  ['points', '点云'],
  ['point', '点', 0],
  ['volume', '体积栅格', 0],
];

function Spreadsheet() {
  return (
    <Area $grow={569} $bg="#262626">
      <Bar $left={6} $right={8}>
        <IconMenu icon="sheet" w={30} label="编辑器类型" />
        <Dropdown value="预览器节点" w={94} ml={13} label="数据来源" />
        <Row $ml={9}>
          <Crumbs>
            <Icon name="object" />
            <span>公寓</span>
            <Sep><Icon name="right" /></Sep>
            <Icon name="wrench" />
            <span>几何节点</span>
            <Sep><Icon name="right" /></Sep>
            <span>预览器</span>
            <Icon name="pin" color="#8a8a8a" />
          </Crumbs>
        </Row>
        <Spacer />
        <Tool aria-label="仅选中"><Icon name="arrow" color="#777" /></Tool>
        <Tool $on $w={22} aria-label="过滤"><Icon name="filter" /></Tool>
      </Bar>
      <SheetMain>
        <SheetSide>
          <SideHeader $h={36}><Icon name="down" />几何数据</SideHeader>
          <GeometryItem><Icon name="geometry" />(几何体)</GeometryItem>
          <SideHeader $h={24}><Icon name="down" />域</SideHeader>
          <ul>
            {TREE.map(([icon, text, count]) => {
              const leaf = text === '体积栅格';
              const child = count !== undefined && !leaf;
              return (
                <TreeRow key={text} $child={child} $leaf={leaf}>
                  {count === undefined && <Icon name="down" />}
                  <Icon name={icon} />
                  <span>{text}</span>
                  {count !== undefined && <output>{count}</output>}
                </TreeRow>
              );
            })}
          </ul>
        </SheetSide>
        <VScroll $h={352} $mr={2} />
        <Sheet aria-label="数据">
          <thead>
            <tr><th /><th /></tr>
          </thead>
          <tbody>
            <tr><td /><td /></tr>
          </tbody>
        </Sheet>
      </SheetMain>
      <SheetFooter>
        <span>行: 0</span>
        <FooterRule />
        <span>列: 0</span>
      </SheetFooter>
    </Area>
  );
}

/* ---------- outliner ---------- */

const OutlinerRow = styled.li`
  display: flex;
  align-items: center;
  height: 22px;
  padding: 0 11px 0 ${(p) => 24 + p.$depth * 22}px;
  gap: 6px;
  background: ${(p) => (p.$odd ? '#2b2b2b' : '#282828')};
  color: ${(p) => (p.$dim ? '#6e6e6e' : '#cfcfcf')};

  input {
    appearance: none;
    position: relative;
    width: 12px;
    height: 12px;
    margin: 0 2px;
    border-radius: 1px;
    border: 1px solid ${(p) => (p.$dim ? '#777' : '#e6e6e6')};
  }
  input:checked {
    background: #e6e6e6;
  }
  input:checked::after {
    content: '';
    position: absolute;
    left: 3px;
    top: 0;
    width: 3px;
    height: 6px;
    border: solid #222;
    border-width: 0 2px 2px 0;
    transform: rotate(40deg);
  }
`;

const OutlinerName = styled.span`
  margin-left: 1px;
  color: ${(p) => (p.$bright ? '#fff' : 'inherit')};
`;

const Extras = styled.span`
  display: flex;
  align-items: center;
  gap: 6px;
  margin-left: 19px;
`;

const Count = styled.span`
  margin: 8px 0 0 -13px;
`;

const Chip = styled.span`
  display: flex;
  padding: 2px;
  margin: -2px;
  border-radius: 4px;
  background: ${(p) => p.$bg};
`;

const Toggle = styled.button`
  display: flex;
`;

const ORANGE = '#d48b4c';
const GREEN = '#1fc48c';
const VIOLET = '#8a92e0';

const OUTLINER = [
  { depth: 1, open: 'right', icon: 'collection', name: '单体', count: 23, check: true },
  { depth: 1, icon: 'collection', name: '集合2', check: false, dim: true },
  { depth: 1, open: 'down', icon: 'collection', name: '住宅楼', check: true },
  { depth: 2, open: 'right', icon: 'meshObject', name: '公寓', extras: ['wrenchLine', 'mesh'], chip: '#5c6266' },
  { depth: 2, open: 'right', icon: 'meshObject', name: '商品房', extras: ['wrenchLine', 'mesh'], dim: true, hidden: true },
  { depth: 1, open: 'right', icon: 'camera', name: 'Camera', extras: ['cameraLine'] },
  { depth: 1, open: 'right', icon: 'meshObject', name: 'Plane.030', extras: ['wrenchLine', 'mesh'] },
  { depth: 1, open: 'right', icon: 'bulb', name: 'Sun.001', extras: ['sun'] },
  { depth: 1, open: 'right', icon: 'meshObject', name: 'Suzanne', extras: ['mesh'] },
];

function OutlinerItem({ item, odd }) {
  const isObject = item.icon !== 'collection';
  const fade = item.dim ? 0.4 : 1;
  const off = item.dim && !isObject ? 0.25 : 1;
  return (
    <OutlinerRow $depth={item.depth - 1} $odd={odd} $dim={item.dim}>
      <Icon name={item.open} />
      <Chip $bg={item.chip || 'none'}>
        <Icon name={item.icon} color={isObject ? ORANGE : '#e0e0e0'} fade={item.dim ? 0.45 : 1} />
      </Chip>
      <OutlinerName>{item.name}</OutlinerName>
      <Extras>
        {item.count && (
          <>
            <Icon name="meshObject" color={ORANGE} />
            <Count>{item.count}</Count>
          </>
        )}
        {(item.extras || []).map((e) => (
          <Chip key={e} $bg={e === 'cameraLine' ? '#4f5552' : 'none'}>
            <Icon name={e} color={e === 'wrenchLine' ? VIOLET : GREEN} fade={fade} />
          </Chip>
        ))}
      </Extras>
      <Spacer />
      {item.check !== undefined && (
        <input type="checkbox" defaultChecked={item.check} aria-label={`启用 ${item.name}`} />
      )}
      <Toggle aria-label="可见"><Icon name={item.hidden ? 'closedEye' : 'eye'} color="#e0e0e0" fade={off} /></Toggle>
      <Toggle aria-label="渲染"><Icon name="photo" color="#e0e0e0" fade={off} /></Toggle>
    </OutlinerRow>
  );
}

function Outliner() {
  return (
    <Area $grow={277}>
      <Bar $right={5} $left={9} $bg={Colors.Area}>
        <IconMenu icon="outliner" w={34} label="编辑器类型" />
        <IconMenu icon="layers" w={34} ml={6} label="显示模式" />
        <Spacer $grow={2} />
        <Search w={128} />
        <Spacer $grow={3} />
        <IconMenu icon="filter" w={34} label="过滤" />
        <Tool $ml={6} $w={22} aria-label="新建集合"><Icon name="newCollection" color="#aaa" /></Tool>
      </Bar>
      <ul>
        <OutlinerRow $depth={0}>
          <Chip $bg="#4c4c4c"><Icon name="collection" /></Chip>
          <OutlinerName $bright>场景集合</OutlinerName>
        </OutlinerRow>
        {OUTLINER.map((item, i) => (
          <OutlinerItem key={item.name} item={item} odd={i % 2 === 0} />
        ))}
      </ul>
    </Area>
  );
}

/* ---------- properties ---------- */

const PropsBody = styled.div`
  display: flex;
  flex: 1;
  min-height: 0;
`;

const PropTabs = styled.div`
  display: flex;
  flex-direction: column;
  width: 30px;
  flex: none;
  padding-top: 9px;
  background: ${Colors.Dark};
`;

const PropTab = styled.button`
  display: flex;
  align-items: center;
  justify-content: center;
  flex: none;
  height: 30px;
  margin-bottom: ${(p) => (p.$gap ? 8 : 0)}px;
  background: ${(p) => (p.$on ? Colors.Header : 'none')};
`;

const PropMain = styled.div`
  display: flex;
  flex-direction: column;
  flex: 1;
  min-width: 0;
  padding: 0 7px 0 8px;
  background: ${Colors.Header};
`;

const AddButton = styled.button`
  display: flex;
  align-items: center;
  flex: none;
  height: 22px;
  margin: 6px 0 10px;
  padding-left: 5px;
  border-radius: 3px;
  background: ${Colors.Widget};

  span {
    flex: 1;
    text-align: center;
  }
`;

const Modifier = styled.div`
  display: flex;
  flex-direction: column;
  flex: 1;
  min-height: 0;
  overflow: hidden;
  border: 1px solid #4f62a0;
  border-bottom: 0;
  border-radius: 3px 3px 0 0;
  background: #3d3d3d;
`;

const ModHeader = styled.div`
  display: flex;
  align-items: center;
  flex: none;
  height: 24px;
  margin: ${(p) => (p.$group ? '9px 0 1px' : 0)};
  padding: 0 ${(p) => (p.$group ? 9 : 2)}px 0 ${(p) => (p.$group ? 7 : 4)}px;
`;

const FlexInput = styled.input`
  flex: 1;
  min-width: 0;
  height: 20px;
  padding: 0 8px;
  background: ${Colors.Dark};
`;

const PropRow = styled.div`
  display: grid;
  grid-template-columns: 156fr 187fr 22px 22px;
  align-items: center;
  flex: none;
  height: 27px;
  padding-right: 8px;
  ${(p) =>
    p.$cut &&
    css`
      mask-image: linear-gradient(#000, transparent);
      opacity: 0.7;
    `}

  label {
    padding-right: 10px;
    text-align: right;
    color: ${(p) => (p.$dim ? '#6b6b6b' : Colors.Text)};
  }
  input,
  select {
    width: 100%;
    height: 20px;
    border-radius: 3px;
    text-align: center;
    background: ${(p) => (p.$dim ? '#303030' : Colors.Widget)};
  }
  input[type='color'] {
    appearance: none;
    overflow: hidden;
  }
  input::-webkit-color-swatch-wrapper {
    padding: 0;
  }
  input::-webkit-color-swatch {
    border: 0;
  }
  select {
    appearance: none;
  }
  > svg {
    justify-self: center;
  }
`;

const Dot = styled.i`
  grid-column: 4;
  justify-self: center;
  width: 4px;
  height: 4px;
  border-radius: 2px;
  background: ${(p) => (p.$dim ? '#555' : '#e6e6e6')};
`;

const Fold = styled.button`
  display: flex;
  align-items: center;
  flex: none;
  gap: 4px;
  height: 27px;
  padding-left: 10px;
`;

const SubPanel = styled.div`
  display: flex;
  flex-direction: column;
  flex: 1;
  margin-top: 2px;
  padding-top: 2px;
  background: #353535;
`;

function Prop({ label, value, color, sheet, dim, menu, cut }) {
  const id = useId();
  return (
    <PropRow $dim={dim} $cut={cut}>
      <label htmlFor={id}>{label}</label>
      {menu && <select id={id} disabled><option> </option></select>}
      {color && <input id={id} type="color" defaultValue={color} />}
      {value && <input id={id} defaultValue={value} />}
      {sheet && <Icon name="sheet" size={18} color="#cfcfcf" />}
      <Dot $dim={dim} />
    </PropRow>
  );
}

const PARAMS = [
  { label: '全局随机种', value: '136' },
  { label: '楼层数', value: '5' },
  { label: '一楼上分组单位', value: '6' },
  { label: '正面的业主数量', value: '1' },
  { label: '侧面窗户数量', value: '2' },
  { label: '窗户单元大小', value: '5' },
  { label: '侧面墙壁数量', value: '4' },
  { label: '楼层高度', value: '4.000', sheet: true },
  { label: '地板厚度', value: '0.200', sheet: true },
  { label: '墙面长度', value: '1 m' },
  { label: '墙壁厚度', value: '0.200', sheet: true },
  { label: '外墙壁颜色', color: '#ffffff', sheet: true },
  { label: '地板颜色', color: '#dde5e2', sheet: true },
];

const UPPER_PARAMS = [
  { label: '一楼以上样式随机种', value: '121' },
  { label: '菜单', menu: true, dim: true },
  { label: '一楼上玻璃颜色', color: '#cef1fd', sheet: true },
  { label: '一楼上玻璃边框颜色', color: '#a5a2af', sheet: true },
  { label: '阳台墙壁颜色', color: '#a03434', sheet: true },
  { label: '飘窗墙壁颜色', color: '#a03434', sheet: true, cut: true },
];

const PROP_TABS = [
  ['tools', '#bbb', true],
  ['renderTab', '#bbb'],
  ['outputTab', '#bbb'],
  ['layers', '#bbb'],
  ['scene', '#bbb'],
  ['world', '#c24660', true],
  ['object', '#d08a4a'],
  ['wrench', '#6f95ee'],
  ['particles', '#8080e0'],
  ['physics', '#6f9be0'],
  ['constraint', '#8a9ee0'],
  ['mesh', '#1fc48c'],
  ['material', '#c24660'],
];

function Properties() {
  return (
    <Area $grow={723} $bg={Colors.Header}>
      <Bar $left={10} $right={6} $h={24}>
        <IconMenu icon="properties" w={34} label="编辑器类型" />
        <Spacer $grow={10} />
        <Search w={128} />
        <Spacer $grow={11} />
        <IconMenu w={22} label="选项" />
      </Bar>
      <PropsBody>
        <PropTabs>
          {PROP_TABS.map(([name, color, gap]) => (
            <PropTab key={name} $gap={gap} $on={name === 'wrench'} aria-label={name}>
              <Icon name={name} color={color} />
            </PropTab>
          ))}
        </PropTabs>
        <PropMain>
          <Bar $right={2} $left={3} $h={41}>
            <Crumbs>
              <Icon name="object" />
              <span>公寓</span>
              <Sep $tight><Icon name="right" /></Sep>
              <Icon name="nodes" />
              <span>GeometryNodes</span>
            </Crumbs>
            <Spacer />
            <Icon name="pin" color="#8a8a8a" />
          </Bar>
          <AddButton>
            <Icon name="plus" />
            <span>添加修改器</span>
          </AddButton>
          <Modifier>
            <ModHeader>
              <Icon name="down" />
              <Row $ml={4} />
              <Icon name="nodes" />
              <Row $ml={12} />
              <FlexInput defaultValue="GeometryNodes" aria-label="修改器名称" />
              <Row $gap={1} $ml={1}>
                <Tool $w={21} aria-label="面"><Icon name="mesh" color="#bbb" /></Tool>
                <Tool $on $w={21} aria-label="编辑模式"><Icon name="editMode" /></Tool>
                <Tool $on $w={21} aria-label="实时"><Icon name="monitor" /></Tool>
                <Tool $on $w={21} aria-label="渲染"><Icon name="photo" /></Tool>
              </Row>
              <IconMenu w={22} label="修改器选项" />
              <Tool $flat $w={24} aria-label="移除"><Icon name="close" size={14} /></Tool>
              <Row $ml={3}><Tool $flat $w={24} aria-label="拖动"><Icon name="grip" color="#999" /></Tool></Row>
            </ModHeader>
            <ModHeader $group>
              <IconMenu icon="nodetree" w={35} label="节点组" />
              <FlexInput defaultValue="住宅楼-公寓-参数" aria-label="节点组名称" />
              <Row $gap={1} $ml={1}>
                <Tool aria-label="伪用户"><Icon name="shield" color="#888" /></Tool>
                <Tool $w={22} aria-label="复制"><Icon name="copy" /></Tool>
                <Tool $w={21} aria-label="断开"><Icon name="close" size={14} /></Tool>
              </Row>
            </ModHeader>
            {PARAMS.map((p) => <Prop key={p.label} {...p} />)}
            <Fold><Icon name="right" />一楼</Fold>
            <Fold><Icon name="down" />一楼上参数</Fold>
            <SubPanel>
              {UPPER_PARAMS.map((p) => <Prop key={p.label} {...p} />)}
            </SubPanel>
          </Modifier>
        </PropMain>
      </PropsBody>
    </Area>
  );
}

/* ---------- node editors ---------- */

const Canvas = styled.div`
  flex: 1;
  min-width: 0;
  position: relative;
  overflow: hidden;
  background: ${(p) => p.$bg};
`;

const Links = styled.svg`
  position: absolute;
  left: 0;
  top: 0;
  width: 100%;
  height: 100%;
`;

const CrumbOverlay = styled.div`
  position: absolute;
  left: 17px;
  top: 15px;
  height: 20px;
  display: flex;
  align-items: center;
  color: #e6e6e6;
`;

const RegionArrow = styled.button`
  position: absolute;
  top: 17px;
  ${(p) => (p.$side === 'left' ? 'left: -4px;' : 'right: -4px;')}
  color: #aaa;
`;

const NodeBox = styled.div`
  position: absolute;
  padding-bottom: 2px;
  background: #303030;
  box-shadow: 0 1px 4px #000;
  font-size: 5px;
  line-height: 8px;
  white-space: nowrap;
  outline: ${(p) => (p.$outline ? `1px solid ${p.$outline}` : 'none')};
`;

const NodeTime = styled.div`
  position: absolute;
  left: 0;
  right: 0;
  bottom: 100%;
  display: flex;
  align-items: center;
  gap: 4px;
  height: 10px;
  padding-left: 2px;
  background: #1c1c1c;
`;

const NodeHead = styled.div`
  display: flex;
  align-items: center;
  gap: 3px;
  height: 8px;
  margin-bottom: 1px;
  padding: 0 3px;
  background: ${(p) => p.$bg};
`;

const NodeRow = styled.div`
  display: flex;
  align-items: center;
  justify-content: ${(p) => (p.$out ? 'flex-end' : 'flex-start')};
  height: ${(p) => p.$h}px;
  gap: 4px;

  select,
  input {
    font-size: 5px;
    line-height: 7px;
  }
  select {
    appearance: none;
    flex: 1;
    min-width: 0;
    height: 7px;
    padding-left: 1px;
  }
  input[type='checkbox'] {
    appearance: none;
    width: 4px;
    height: 4px;
    margin-left: 6px;
    background: #545454;
  }
  input[type='checkbox']:checked {
    background: #6a86e0;
  }
`;

const NodeSelect = styled.label`
  display: flex;
  align-items: center;
  flex: 1;
  height: 7px;
  margin: 0 6px;
  background: #252525;
`;

const Socket = styled.i`
  flex: none;
  width: 4px;
  height: 4px;
  margin: 0 -2px;
  border-radius: 2px;
  background: ${(p) => p.$color};
`;

const NodeField = styled.label`
  display: flex;
  align-items: center;
  justify-content: space-between;
  flex: 1;
  height: 7px;
  margin: 0 5px;
  padding: 0 4px;
  background: ${(p) => (p.$blue ? Colors.Blue : '#4a4a4a')};

  input {
    width: 20px;
    height: 7px;
    text-align: right;
  }
`;

const NodeSwatch = styled.span`
  width: 27px;
  height: 7px;
  margin: 0 4px 0 auto;
  background: ${(p) => p.$color};
`;

const HEAD = {
  geo: '#1d7a60',
  math: '#246283',
  input: '#83294f',
  color: '#6e6e1d',
  vector: '#3c3c93',
  dark: '#1d1d1d',
  viewer: '#3d1a28',
};

// row: [kind, text, socket colour or value]
function renderRow(row, i, rh) {
  const [kind, text, extra] = row;
  if (kind === 'out') {
    return <NodeRow key={i} $h={rh} $out>{text}<Socket $color={extra || Colors.Gray} /></NodeRow>;
  }
  if (kind === 'in') {
    return <NodeRow key={i} $h={rh}><Socket $color={extra || Colors.Gray} />{text}</NodeRow>;
  }
  if (kind === 'select') {
    return (
      <NodeRow key={i} $h={11}>
        <NodeSelect>
          <select defaultValue={text} aria-label={text}><option>{text}</option></select>
          <Icon name="down" size={5} />
        </NodeSelect>
      </NodeRow>
    );
  }
  if (kind === 'check') {
    return (
      <NodeRow key={i} $h={10} as="label">
        <input type="checkbox" defaultChecked={extra} />{text}
      </NodeRow>
    );
  }
  if (kind === 'swatch') {
    return <NodeRow key={i} $h={rh}><Socket $color={Colors.Color} />{text}<NodeSwatch $color={extra} /></NodeRow>;
  }
  return (
    <NodeRow key={i} $h={rh}>
      <NodeField $blue={kind === 'slider'}>{text}<input defaultValue={extra} aria-label={text || '值'} /></NodeField>
    </NodeRow>
  );
}

function Node({ node, view, rowHeight }) {
  const { x, y, w = 57, title, head, rows, time, outline } = node;
  return (
    <NodeBox style={{ left: x - view.x, top: y - view.y, width: w }} $outline={outline}>
      {time && <NodeTime><Icon name="timer" size={7} />{time}</NodeTime>}
      <NodeHead $bg={HEAD[head]}>
        <Icon name="down" size={5} />
        {title}
        {head === 'viewer' && <><Spacer /><Icon name="eye" size={6} /></>}
      </NodeHead>
      {rows.map((r, i) => renderRow(r, i, rowHeight))}
    </NodeBox>
  );
}

const G = Colors.Geo;
const N = Colors.Int;
const Y = '#c7d92c';
const P = '#6363c7';

const GEO_NODES = [
  { x: 387, y: 623, title: '分离几何体', head: 'geo', time: '< 0.1 ms', rows: [['out', '选中项', G], ['out', '反相', G], ['select', '面'], ['in', '几何数据', G], ['in', '选中项']] },
  { x: 218, y: 692, title: '大于', head: 'math', rows: [['out', '结果'], ['select', '浮点'], ['select', '大于'], ['in', 'A'], ['field', 'B', '1.000']] },
  { x: 325, y: 734, title: '和', head: 'math', rows: [['out', '布尔'], ['select', '和'], ['in', '布尔'], ['in', '布尔']] },
  { x: 182, y: 769, title: '已命名属性', head: 'input', rows: [['out', '属性'], ['out', '存在'], ['select', '整数'], ['field', '', '']] },
  { x: 411, y: 766, title: '已命名属性', head: 'input', rows: [['out', '属性'], ['out', '存在'], ['select', '整数'], ['in', '环绕编号', '#70b2ff']] },
  { x: 621, y: 623, w: 58, title: '预览器', head: 'viewer', outline: '#ffffff', rows: [['select', '自动'], ['in', '几何数据', G], ['in', '值']] },
  { x: 786, y: 670, title: '拆分为实例', head: 'geo', time: '0.25 ms', rows: [['out', '实例', G], ['out', '群组 ID'], ['select', '面'], ['in', '几何数据', G], ['in', '选中项'], ['in', '群组 ID']] },
  { x: 925, y: 669, w: 58, title: 'For Each 几何元素', head: 'dark', outline: '#4a4f6e', rows: [['select', '实例'], ['out', '编号', N], ['out', '元素', G], ['in', '几何数据', G], ['in', '选中项'], ['in', '', '#555']] },
  { x: 1069, y: 700, title: '实现实例', head: 'geo', time: '0.12 ms', rows: [['out', '几何数据', G], ['in', '几何数据', G], ['in', '选中项'], ['check', '实现全部', true], ['field', '深度', '0']] },
  { x: 920, y: 777, title: '值', head: 'input', rows: [['out', '值'], ['field', '', '0.030'], ['in', '', 'transparent']] },
  { x: 865, y: 822, title: '位置', head: 'input', rows: [['out', '位置', P]] },
  { x: 934, y: 810, title: '在域上评估', head: 'math', rows: [['out', '值', P], ['select', '矢量'], ['select', '面'], ['in', '值', P]] },
  { x: 1048, y: 790, w: 53, title: '分离 XYZ', head: 'math', rows: [['out', 'X'], ['out', 'Y'], ['out', 'Z'], ['in', '矢量', P]] },
  { x: 1048, y: 847, title: '随机值', head: 'math', rows: [['out', '值', N], ['select', '整数'], ['field', '最小值', '0'], ['field', '最大值', '1'], ['in', 'ID', N], ['in', '随机种', N]] },
  { x: 582, y: 847, title: '累积场', head: 'math', rows: [['out', '首'], ['out', '尾'], ['out', '总数'], ['select', '整数'], ['select', '面'], ['field', '值', '1'], ['in', '群组 ID']] },
  { x: 695, y: 851, title: '递增', head: 'math', rows: [['out', '值'], ['select', '递增'], ['check', '钳制'], ['in', '值'], ['in', '增量']] },
  { x: 502, y: 881, title: '网格孤岛', head: 'input', rows: [['out', '孤岛编号'], ['out', '孤岛数量']] },
  { x: 572, y: 941, title: '相乘', head: 'math', rows: [['out', '值'], ['select', '相乘'], ['check', '钳制'], ['in', '值'], ['field', '值', '2.000']] },
  { x: 447, y: 979, title: '组输入', head: 'dark', rows: [['out', '一楼上分组单位', N]] },
  { x: 804, y: 886, title: '组输入', head: 'dark', rows: [['out', '全局随机种', N], ['out', '侧面窗户数量', N], ['out', '窗户单元大小', N], ['out', '侧面墙壁数量', N], ['out', '一楼以上样式随机种', N], ['out', '菜单', '#666'], ['out', '阳台墙壁颜色', Y], ['out', '飘窗墙壁颜色', Y], ['out', '', '#555']] },
  { x: 924, y: 872, title: '相加', head: 'math', rows: [['out', '值'], ['select', '相加'], ['check', '钳制'], ['in', '值'], ['in', '值']] },
  { x: 797, y: 981, title: '网格孤岛', head: 'input', rows: [['out', '孤岛编号'], ['out', '孤岛数量']] },
  { x: 910, y: 961, title: '累积场', head: 'math', rows: [['out', '首'], ['out', '尾'], ['out', '总数'], ['select', '整数'], ['select', '面'], ['field', '值', '1']] },
  { x: 1092, y: 935, title: '递增', head: 'math', rows: [['out', '值'], ['select', '值'], ['check', '钳制'], ['in', '值'], ['in', '增量']] },
];

// [x1, y1, x2, y2, colour, width]
const GEO_LINKS = [
  [222, 617, 387, 665, G, 2],
  [445, 636, 580, 667, G, 2],
  [580, 667, 786, 712, G, 2],
  [580, 667, 620, 647, '#9fe8cf', 2],
  [843, 683, 925, 712, G, 2],
  [983, 703, 1069, 724, G, 2],
  [275, 706, 387, 674, '#777', 1],
  [275, 706, 325, 777, '#777', 1],
  [239, 783, 325, 768, '#777', 1],
  [752, 865, 786, 731, '#666', 1],
  [639, 870, 695, 895, '#777', 1],
  [629, 955, 695, 904, '#a8a8a8', 2],
  [559, 895, 582, 918, '#777', 1],
  [504, 993, 572, 985, '#8fae90', 1.5],
  [504, 993, 797, 991, '#5f8a62', 1.5],
  [640, 992, 797, 991, '#9a9a9a', 1],
  [855, 991, 910, 991, '#a8a8a8', 2],
  [966, 989, 1092, 988, '#a8a8a8', 2],
  [966, 985, 1092, 979, '#777', 1],
  [861, 899, 924, 916, '#8fb896', 1.5],
  [861, 936, 924, 925, '#8fb896', 1.5],
  [981, 886, 1048, 909, '#9fae9f', 2],
  [983, 694, 1011, 873, '#5e8f62', 1.5],
  [1011, 873, 1048, 899, '#5e8f62', 1.5],
  [991, 824, 1048, 831, '#45457a', 1],
  [922, 836, 934, 853, '#45457a', 1],
  [855, 995, 1048, 882, '#4f6650', 1],
  [855, 995, 890, 1020, '#666', 1],
];

const SHADER_NODES = [
  { x: -8, y: 557, w: 59, title: '混合', head: 'color', rows: [['out', '结果', Y], ['select', '颜色'], ['select', '混合'], ['check', '钳制结果'], ['check', '钳制系数'], ['in', '系数'], ['in', 'A', Y], ['swatch', 'B', '#80c41c']] },
  { x: 107, y: 588, w: 59, title: '混合', head: 'color', rows: [['out', '结果', Y], ['select', '颜色'], ['select', '混合'], ['check', '钳制结果'], ['check', '钳制系数', true], ['in', '系数'], ['in', 'A', Y], ['swatch', 'B', '#d81010']] },
  { x: -19, y: 687, w: 59, title: '', head: 'input', rows: [['out', '颜色', '#c7c729'], ['out', '矢量', P], ['out', '系数'], ['out', 'Alpha'], ['select', ''], ['select', '']] },
  { x: 139, y: 756, w: 58, title: '凹凸', head: 'vector', rows: [['out', '法向', P], ['check', '反转'], ['slider', '强度', '1.000'], ['field', '距离', '1.000'], ['field', '过滤', '0.100'], ['in', '高度'], ['in', '法向', P]] },
  { x: -18, y: 798, w: 59, title: '', head: 'math', rows: [['out', '颜色', Y], ['out', 'Alpha'], ['select', '常值'], ['swatch', '', '#1070f0'], ['field', '', '0.909'], ['swatch', '', '#1070f0']] },
];

const SHADER_LINKS = [
  [52, 571, 107, 665, '#a9b836', 1.5],
  [40, 721, 107, 657, '#888', 1.5],
  [40, 743, 79, 794, '#888', 1.5],
  [79, 794, 139, 821, '#888', 1.5],
  [42, 812, 220, 736, '#a9b836', 1.5],
  [0, 665, 6, 685, '#a9b836', 1.5],
  [28, 760, 39, 806, '#a9b836', 1.5],
  [197, 770, 220, 768, '#8a3148', 1.5],
];

function NodeCanvas({ nodes, links, view, bg, zone, rowHeight }) {
  return (
    <Canvas $bg={bg}>
      <Links aria-hidden="true">
        <g transform={`translate(${-view.x} ${-view.y})`}>
          {zone && <path d={zone} fill="#1d212d" />}
          {links.map(([x1, y1, x2, y2, c, w], i) => (
            <line key={i} x1={x1} y1={y1} x2={x2} y2={y2} stroke={c} strokeWidth={w} />
          ))}
          {zone && <circle cx="580" cy="667" r="2.500" fill={G} />}
        </g>
      </Links>
      {nodes.map((n, i) => <Node key={i} node={n} view={view} rowHeight={rowHeight} />)}
      {zone && (
        <Links aria-hidden="true">
          <path d="M358 143l24 20-12 1-9 13z" fill="#16395e" />
          <path d="M358 143l13 11-6 4-5 7z" fill="#f0e8e4" />
          <path d="M368 157l6 5-8 8" fill="none" stroke="#3f8fd0" />
        </Links>
      )}
    </Canvas>
  );
}

const EditorBody = styled.div`
  display: flex;
  flex: 1;
  min-height: 0;
  position: relative;
`;

function ShaderEditor() {
  return (
    <Area $grow={218} $bg={Colors.Dark}>
      <Bar $bg="#1f1f1f" $left={7} $h={26}>
        <IconMenu icon="shader" w={34} label="编辑器类型" />
        <Dropdown icon="object" value="物体" w={92} ml={5} />
        <Row $ml={5}>
          <MenuButton>视图</MenuButton>
          <MenuButton>选择</MenuButton>
        </Row>
      </Bar>
      <EditorBody>
        <NodeCanvas nodes={SHADER_NODES} links={SHADER_LINKS} view={{ x: 2, y: 540 }} bg="#1c1c1c" rowHeight={10} />
        <VScroll $h={415} $mt={60} $bg="#2e2e2e" />
        <CrumbOverlay>
          <Crumbs $gap={9}>
            <Icon name="object" />
            <span />
            <Sep $tight><Icon name="right" /></Sep>
            <Icon name="mesh" />
            <span>Pl</span>
            <Sep $tight><Icon name="right" /></Sep>
            <Icon name="material" />
            <span>住...</span>
          </Crumbs>
        </CrumbOverlay>
        <RegionArrow $side="left" aria-label="工具栏"><Icon name="right" /></RegionArrow>
        <RegionArrow $side="right" aria-label="侧栏"><Icon name="left" /></RegionArrow>
      </EditorBody>
    </Area>
  );
}

const SidePanel = styled.aside`
  display: flex;
  flex-direction: column;
  flex: none;
  width: 339px;
  padding: 0 11px 0 17px;
  background: #393939;
`;

const PanelTitle = styled.div`
  display: flex;
  align-items: center;
  gap: 2px;
  flex: none;
  height: 32px;
  margin: 0 0 6px -3px;
  color: #f0f0f0;
`;

const ListWrap = styled.div`
  display: flex;
  flex: 1;
  min-height: 0;
  gap: 11px;
`;

const ListBox = styled.div`
  display: flex;
  flex: 1;
  overflow: hidden;
  background: #2b2b2b;

  ul {
    flex: 1;
    padding-top: 4px;
  }
`;

const SocketRow = styled.li`
  display: flex;
  align-items: center;
  height: 24px;
  margin-left: ${(p) => (p.$fold ? 7 : p.$sub ? 17 : 31)}px;
  padding: 0 20px 0 ${(p) => (p.$sub ? 28 : 0)}px;
  border-left: ${(p) => (p.$sub ? '1px solid #444' : 'none')};
  gap: ${(p) => (p.$fold ? 2 : 8)}px;
  color: #c4c4c4;
`;

const SocketDot = styled.i`
  width: 9px;
  height: 9px;
  border-radius: 5px;
  margin-left: ${(p) => (p.$end ? 'auto' : '0')};
  background: ${(p) => p.$color || 'transparent'};
`;

const ListButtons = styled.div`
  display: flex;
  flex-direction: column;

  button:nth-child(3) {
    margin-top: 10px;
  }
`;

const RegionTabs = styled.div`
  display: flex;
  flex-direction: column;
  flex: none;
  width: 22px;
  gap: 4px;
  padding: 6px 2px 0 1px;
  background: #191919;
`;

const RegionTab = styled.button`
  height: ${(p) => p.$h}px;
  flex: none;
  writing-mode: vertical-rl;
  text-orientation: sideways;
  border: 1px solid #2d2d2d;
  border-left: 0;
  border-radius: 0 4px 4px 0;
  background: ${(p) => (p.$on ? '#303030' : '#1c1c1c')};
  color: ${(p) => (p.$on ? '#fff' : '#b8b8b8')};
`;

const SOCKETS = [
  { text: '几何数据', out: true },
  { text: '几何数据', color: '#1ce0a4' },
  { text: '全局随机种', color: '#5e9460' },
  { text: '楼层数', color: '#5e9460' },
  { text: '一楼上分组单位', color: '#5e9460' },
  { text: '正面的业主数量', color: '#5e9460' },
  { text: '侧面窗户数量', color: '#5e9460' },
  { text: '窗户单元大小', color: '#5e9460' },
  { text: '侧面墙壁数量', color: '#5e9460' },
  { text: '楼层高度', color: '#a1a1a1' },
  { text: '地板厚度', color: '#a1a1a1' },
  { text: '墙面长度', color: '#a1a1a1' },
  { text: '墙壁厚度', color: '#a1a1a1' },
  { text: '外墙壁颜色', color: '#c6d42e' },
  { text: '地板颜色', color: '#c6d42e' },
  { text: '一楼', fold: true },
  { text: '一楼样式随机种', color: '#5e9460', sub: true },
  { text: '一楼高度', color: '#a1a1a1', sub: true },
];

const REGION_TABS = [
  ['群组', 41],
  ['节点', 42],
  ['工具', 42],
  ['视图', 42],
  ['节点树仓库', 77],
  ['节点牧人', 66],
];

function GeometryEditor() {
  return (
    <Area $grow={1249} $bg="#111111">
      <Bar $bg="#1c1c1c" $left={6} $right={8} $h={26}>
        <IconMenu icon="nodes" w={35} label="编辑器类型" />
        <Dropdown value="修改器" w={75} ml={5} />
        <Row $ml={3}>
          {['视图', '选择', '添加', '节点'].map((m) => (
            <MenuButton key={m}>{m}</MenuButton>
          ))}
        </Row>
        <Spacer $grow={6} />
        <DataBlock>
          <IconMenu icon="nodetree" w={34} label="节点组" />
          <NameInput $w={115} defaultValue="住宅楼-公寓-参数" aria-label="节点组名称" />
          <Row $gap={1}>
            <Tool $w={21} aria-label="伪用户"><Icon name="shield" color="#888" /></Tool>
            <Tool $w={21} aria-label="复制"><Icon name="copy" /></Tool>
            <Tool $w={21} aria-label="断开"><Icon name="close" size={14} /></Tool>
          </Row>
        </DataBlock>
        <Row $ml={10}><Icon name="pin" color="#8a8a8a" /></Row>
        <Spacer $grow={13} />
        <Tool $w={21} aria-label="吸附"><Icon name="magnet" color="#999" /></Tool>
        <Tool $on $w={21} $ml={6} aria-label="叠加层"><Icon name="overlay" /></Tool>
        <IconMenu w={22} label="叠加层选项" bg="#1c1c1c" />
      </Bar>
      <EditorBody>
        <NodeCanvas
          nodes={GEO_NODES}
          links={GEO_LINKS}
          view={{ x: 224, y: 540 }}
          bg="#111111"
          rowHeight={9}
          zone="M939 661L1110 665V1030H1104L1091 1010L992 862L952 775L939 743z"
        />
        <SidePanel>
          <PanelTitle>
            <Icon name="down" />
            群组接口
            <Spacer />
            <Icon name="grip" color="#999" />
          </PanelTitle>
          <ListWrap>
            <ListBox>
              <ul>
                {SOCKETS.map((s, i) => (
                  <SocketRow key={i} $fold={s.fold} $sub={s.sub}>
                    {s.fold ? <Icon name="down" /> : <SocketDot $color={s.color} />}
                    {s.text}
                    {s.out && <SocketDot $end $color="#1ce0a4" />}
                  </SocketRow>
                ))}
              </ul>
              <VScroll $w={9} $h={259} $mt={5} $mr={5} $bg="#4b4b4b" />
            </ListBox>
            <ListButtons>
              <IconDrop $w={20} aria-label="添加"><Icon name="plus" /></IconDrop>
              <Tool aria-label="移除"><Icon name="minus" /></Tool>
              <IconDrop $w={20} aria-label="更多"><Icon name="down" /></IconDrop>
            </ListButtons>
          </ListWrap>
        </SidePanel>
        <VScroll $h={291} $w={4} $ml={2} $bg="#333" />
        <RegionTabs>
          {REGION_TABS.map(([t, h]) => (
            <RegionTab key={t} $h={h} $on={t === '群组'}>{t}</RegionTab>
          ))}
        </RegionTabs>
        <CrumbOverlay>
          <Crumbs>
            <Icon name="object" />
            <span>公寓</span>
            <Sep $tight><Icon name="right" /></Sep>
            <Icon name="nodes" />
            <span>GeometryNodes</span>
            <Sep $tight><Icon name="right" /></Sep>
            <Icon name="nodetree" />
            <span>住宅楼-公寓-参数</span>
          </Crumbs>
        </CrumbOverlay>
        <RegionArrow $side="left" aria-label="工具栏"><Icon name="right" /></RegionArrow>
      </EditorBody>
    </Area>
  );
}

/* ---------- timeline, status bar, overlays ---------- */

const TimelineBar = styled.div`
  display: flex;
  align-items: center;
  flex: none;
  height: 28px;
  padding: 0 16px 0 11px;
  border-top: 1px solid #3a3a3a;
  background: ${Colors.Header};
`;

const FrameField = styled.label`
  display: flex;
  align-items: center;
  justify-content: ${(p) => (p.$center ? 'center' : 'space-between')};
  width: ${(p) => p.$w}px;
  height: 20px;
  margin-left: ${(p) => p.$ml || 0}px;
  padding: 0 8px;
  border-radius: 3px;
  background: #454545;

  input {
    width: 40px;
    text-align: ${(p) => (p.$center ? 'center' : 'right')};
  }
`;

function Timeline() {
  return (
    <TimelineBar>
      <IconMenu icon="clock" w={32} bg="none" label="编辑器类型" />
      <Row $ml={14}>回放<Row $ml={5} /><Icon name="down" size={12} /></Row>
      <Row $ml={9}>插帧<Row $ml={6} /><Icon name="down" size={12} /></Row>
      <Row $ml={3}>
        <MenuButton>视图</MenuButton>
        <MenuButton>标记</MenuButton>
      </Row>
      <Spacer $grow={5} />
      <Row $gap={1}>
        {['record', 'down', 'first', 'playBack', 'play', 'last'].map((n) => (
          <Tool key={n} $w={27} aria-label={n}><Icon name={n} color="#bbb" /></Tool>
        ))}
      </Row>
      <Spacer $grow={2} />
      <FrameField $w={110} $center><input defaultValue="2" aria-label="当前帧" /></FrameField>
      <Row $ml={4}><Icon name="timer" /></Row>
      <FrameField $w={88} $ml={4}>起始<input defaultValue="1" /></FrameField>
      <FrameField $w={150} $ml={1}>结束点<input defaultValue="1" /></FrameField>
      <FrameField $w={120} $ml={1} />
    </TimelineBar>
  );
}

const StatusBar = styled.footer`
  display: flex;
  align-items: center;
  flex: none;
  height: 24px;
  padding: 0 14px 0 9px;
  gap: 5px;
  color: #8a8a8a;
`;

const Report = styled.div`
  display: flex;
  align-items: center;
  gap: 10px;
  width: 171px;
  height: 20px;
  border-radius: 3px;
  background: #1b2231;
  color: #d5d5d5;
`;

const InfoBadge = styled.span`
  width: 24px;
  height: 20px;
  border-radius: 3px;
  background: #23406f;
  display: flex;
  align-items: center;
  justify-content: center;

  b {
    width: 14px;
    height: 14px;
    border-radius: 2px;
    background: #fff;
    color: #23406f;
    line-height: 14px;
    text-align: center;
  }
`;

const Watermark = styled.div`
  position: absolute;
  left: 11px;
  bottom: 10px;
  display: flex;
  align-items: center;
  gap: 12px;
  opacity: 0.28;
  pointer-events: none;
  font-family: Inter, sans-serif;
  font-size: 36px;
  line-height: 40px;
  font-weight: 600;
  color: #ddd;
`;

const KeyCast = styled.div`
  position: absolute;
  left: 35px;
  bottom: 122px;
  font-size: 19px;
  line-height: 24px;
  font-weight: 500;
  color: #fff;
  white-space: nowrap;
  text-shadow: 0 0 3px #000;
  pointer-events: none;
`;

const KeyRow = styled.div`
  display: flex;
  align-items: center;
  gap: 11px;
  margin: 8px 0 10px -1px;
`;

const Key = styled.kbd`
  height: 35px;
  padding: 0 7px;
  border: 1px solid #fff;
  border-radius: 6px;
  font-family: inherit;
  line-height: 32px;
`;

const Rule = styled.div`
  width: 103px;
  height: 2px;
  margin-bottom: 7px;
  background: #fff;
`;

const Operator = styled.div`
  font-size: 20px;
  font-weight: 400;
`;

const Subtitle = styled.p`
  position: absolute;
  left: 427px;
  bottom: 6px;
  margin: 0;
  font-family: 'Noto Sans CJK SC', sans-serif;
  font-size: 55px;
  line-height: 80px;
  font-weight: 500;
  color: #fff;
  white-space: nowrap;
  pointer-events: none;
  -webkit-text-stroke: 3px #000;
  paint-order: stroke fill;
`;

const Main = styled.main`
  display: flex;
  flex: 1;
  min-height: 0;
  gap: 3px;
  padding: 0 2px 0 1px;
`;

const Column = styled.div`
  display: flex;
  flex-direction: column;
  flex: ${(p) => p.$grow} 1 0;
  min-width: 0;
  gap: 3px;
`;

const Split = styled.div`
  display: flex;
  flex: ${(p) => p.$grow} 1 0;
  min-height: 0;
  gap: 3px;
`;

export default function App() {
  return (
    <Screen>
      <GlobalStyle />
      <TopBar />
      <Main>
        <Column $grow={1470}>
          <Split $grow={457}>
            <Viewport />
            <Spreadsheet />
          </Split>
          <Split $grow={512}>
            <ShaderEditor />
            <GeometryEditor />
          </Split>
          <Timeline />
        </Column>
        <Column $grow={444}>
          <Outliner />
          <Properties />
        </Column>
      </Main>
      <StatusBar>
        <Icon name="mouseLeft" />
        <span>选择(切换)</span>
        <Row $ml={1} />
        <Icon name="mouseRight" />
        <span>混合节点</span>
        <Spacer $grow={12} />
        <Report>
          <InfoBadge><b>i</b></InfoBadge>
          已保存 "住宅楼.blend"
        </Report>
        <Spacer $grow={11} />
        <span>内存: 599.0 MiB | 显存: 2.7/4.0 GiB | 4.4.3</span>
      </StatusBar>
      <Watermark>
        <svg width="38" height="40" viewBox="0 0 38 40" aria-hidden="true">
          <rect width="38" height="40" rx="6" fill="#ddd" />
          <path d="M12 12l14 8-14 8z" fill="#333" />
        </svg>
        tafe.cc
      </Watermark>
      <KeyCast>
        <div>Wheel Up x9</div>
        <div>Middle Mouse</div>
        <div>Shift + Right Mouse</div>
        <div>Shift + Ctrl + Left Mouse</div>
        <KeyRow>
          <svg width="35" height="44" viewBox="0 0 35 44" fill="none" stroke="#fff" aria-hidden="true">
            <path d="M8 .700h19q7 0 7 8v17q0 17-16.500 17T1 25.700V8.700q0-8 7-8zM1 22h33M12 1v21M23 1v21" strokeWidth="1.200" />
          </svg>
          <Key>Shift + Ctrl</Key>
        </KeyRow>
        <Rule />
        <Operator>连接预览器 ('node.select_link_viewer')</Operator>
      </KeyCast>
      <Subtitle>那么这里的话,就是用这个环绕编号去吸附它</Subtitle>
    </Screen>
  );
}
